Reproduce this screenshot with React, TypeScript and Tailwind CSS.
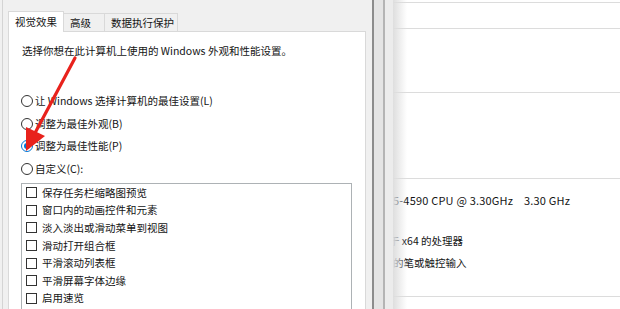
import React from "react";

const radios = [
  { label: "让 Windows 选择计算机的最佳设置(L)", checked: false },
  { label: "调整为最佳外观(B)", checked: false },
  { label: "调整为最佳性能(P)", checked: true },
  { label: "自定义(C):", checked: false },
];

const effects = [
  "保存任务栏缩略图预览",
  "窗口内的动画控件和元素",
  "淡入淡出或滑动菜单到视图",
  "滑动打开组合框",
  "平滑滚动列表框",
  "平滑屏幕字体边缘",
  "启用速览",
];

const Radio: React.FC<{ checked: boolean }> = ({ checked }) => (
  <span
    className={`flex h-[12px] w-[12px] shrink-0 items-center justify-center rounded-full border bg-white ${
      checked ? "border-[#0078d7]" : "border-[#333333]"
    }`}
  >
    {checked && <span className="h-[6px] w-[6px] rounded-full bg-[#0078d7]" />}
  </span>
);

const Tab: React.FC<{ label: string; width: string; active?: boolean }> = ({
  label,
  width,
  active = false,
}) => (
  <div
    className={`flex items-center border border-b-0 border-[#d9d9d9] pl-[6px] ${width} ${
      active ? "relative z-10 -mb-px h-[21px] bg-white" : "mt-[2px] h-[18px] bg-[#f0f0f0] -ml-px"
    }`}
  >
    {label}
  </div>
);

export default function App() {
  return (
    <div className="relative flex h-[309px] w-[620px] overflow-hidden bg-[#f0f0f0] font-['Microsoft_YaHei','Noto_Sans_CJK_SC',sans-serif] text-[10.5px] leading-[16px] text-[#141414]">
      {/* performance options dialog */}
      <div className="flex w-[372px] shrink-0">
        <div className="w-[2px] shrink-0" />
        <div className="w-px shrink-0 bg-[#d4d4d4]" />
        <div className="flex flex-1 flex-col pl-[5px] pt-[11px]">
          <div className="flex h-[21px] items-end">
            <Tab label="视觉效果" width="w-[56px]" active />
            <Tab label="高级" width="w-[42px]" />
            <Tab label="数据执行保护" width="w-[74px]" />
          </div>
          <div className="w-[358px] flex-1 border border-b-0 border-[#d9d9d9] bg-white pl-[13px] pt-[11px]">
            <div>选择你想在此计算机上使用的 Windows 外观和性能设置。</div>
            <div className="mt-[31px]">
              {radios.map((r) => (
                <div key={r.label} className="-ml-px flex h-[22.5px] items-center gap-[2px]">
                  <Radio checked={r.checked} />
                  <span>{r.label}</span>
                </div>
              ))}
            </div>
            <div className="ml-[-1px] mt-[3px] h-[200px] w-[331px] border border-[#adb2b5] pl-[4px]">
              {effects.map((e) => (
                <div key={e} className="flex h-[17.6px] items-center gap-[5px]">
                  <span className="h-[11px] w-[11px] shrink-0 border border-[#333333] bg-white" />
                  <span>{e}</span>
                </div>
              ))}
            </div>
          </div>
        </div>
      </div>

      {/* window frame edges */}
      <div className="w-[2px] shrink-0 bg-[#8c8c8c]" />
      <div className="w-[9px] shrink-0 bg-[#e4e4e4]" />
      <div className="w-[2px] shrink-0 bg-[#b4b4b4]" />
      <div className="w-[8px] shrink-0 bg-[#ececec]" />

      {/* system window behind */}
      <div className="relative flex flex-1 flex-col overflow-hidden bg-white">
        <div className="h-[2px]" />
        <div className="h-[26px] border-t border-[#dcdcdc]" />
        <div className="h-[64px] border-t border-[#dcdcdc]" />
        <div className="h-[86px] border-t border-[#dcdcdc]" />
        <div className="h-[118px] border-t border-[#dcdcdc] pt-[13px]">
          <div className="whitespace-pre text-[11px] tracking-[0.2px]">5-4590 CPU @ 3.30GHz    3.30 GHz</div>
          <div className="mt-[25px] -ml-[4px] whitespace-nowrap">于 x64 的处理器</div>
          <div className="mt-[6px] whitespace-nowrap">的笔或触控输入</div>
        </div>
        <div className="flex-1 border-t border-[#dcdcdc]" />
        <div className="pointer-events-none absolute inset-y-0 left-0 w-[14px] bg-[linear-gradient(to_right,#dedede,rgba(255,255,255,0))]" />
      </div>

      {/* red annotation arrow */}
      <svg className="pointer-events-none absolute left-0 top-0" width="620" height="309">
        <line x1="75" y1="58" x2="35" y2="133" stroke="#e8221c" strokeWidth="3.2" strokeLinecap="round" />
        <polygon points="26,151 26,127 45,136" fill="#e8221c" />
      </svg>
    </div>
  );
}
